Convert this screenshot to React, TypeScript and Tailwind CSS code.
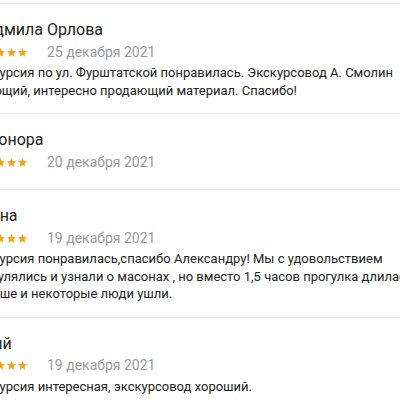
import React from 'react';

type Review = {
  name: string;
  date: string;
  text?: string;
};

const reviews: Review[] = [
  {
    name: 'Людмила Орлова',
    date: '25 декабря 2021',
    text: 'Экскурсия по ул. Фурштатской понравилась. Экскурсовод А. Смолин знающий, интересно продающий материал. Спасибо!',
  },
  { name: 'Элеонора', date: '20 декабря 2021' },
  {
    name: 'Ирина',
    date: '19 декабря 2021',
    text: 'Экскурсия понравилась,спасибо Александру! Мы с удовольствием прогулялись и узнали о масонах , но вместо 1,5 часов прогулка длилась дольше и некоторые люди ушли.',
  },
  {
    name: 'Юрий',
    date: '19 декабря 2021',
    text: 'Экскурсия интересная, экскурсовод хороший.',
  },
];

// five gold stars
const Stars = () => (
  <div className="flex items-center ml-[3px]">
    {[0, 1, 2, 3, 4].map((i) => (
      <svg key={i} width="11" height="11" viewBox="0 0 24 24" className="fill-[#f2a516]">
        <path d="M12 2l2.9 6.9 7.1.6-5.4 4.7 1.6 7-6.2-3.8-6.2 3.8 1.6-7L2 9.5l7.1-.6z" />
      </svg>
    ))}
  </div>
);

const ReviewItem = ({ review }: { review: Review }) => (
  <div className={`border-t border-[#e4e4e4] pt-4 ${review.text ? 'pb-[14px]' : 'pb-[17px]'}`}>
    <div className="text-[16px] leading-5 text-[#222]">{review.name}</div>
    <div className="flex items-center gap-[19px] mt-[2px] h-5">
      <Stars />
      <span className="text-[14px] text-[#9a9a9a]">{review.date}</span>
    </div>
    {review.text && (
      <p className="mt-[2px] text-[13px] leading-[17.5px] text-[#222]">{review.text}</p>
    )}
  </div>
);

export default function App() {
  return (
    <div
      className="w-[400px] h-[400px] overflow-hidden bg-white pt-[3px]"
      style={{ fontFamily: 'Roboto, "Noto Sans", sans-serif' }}
    >
      <div className="ml-[-30px] w-[448px]">
        {reviews.map((r, i) => (
          <ReviewItem key={i} review={r} />
        ))}
      </div>
    </div>
  );
}
